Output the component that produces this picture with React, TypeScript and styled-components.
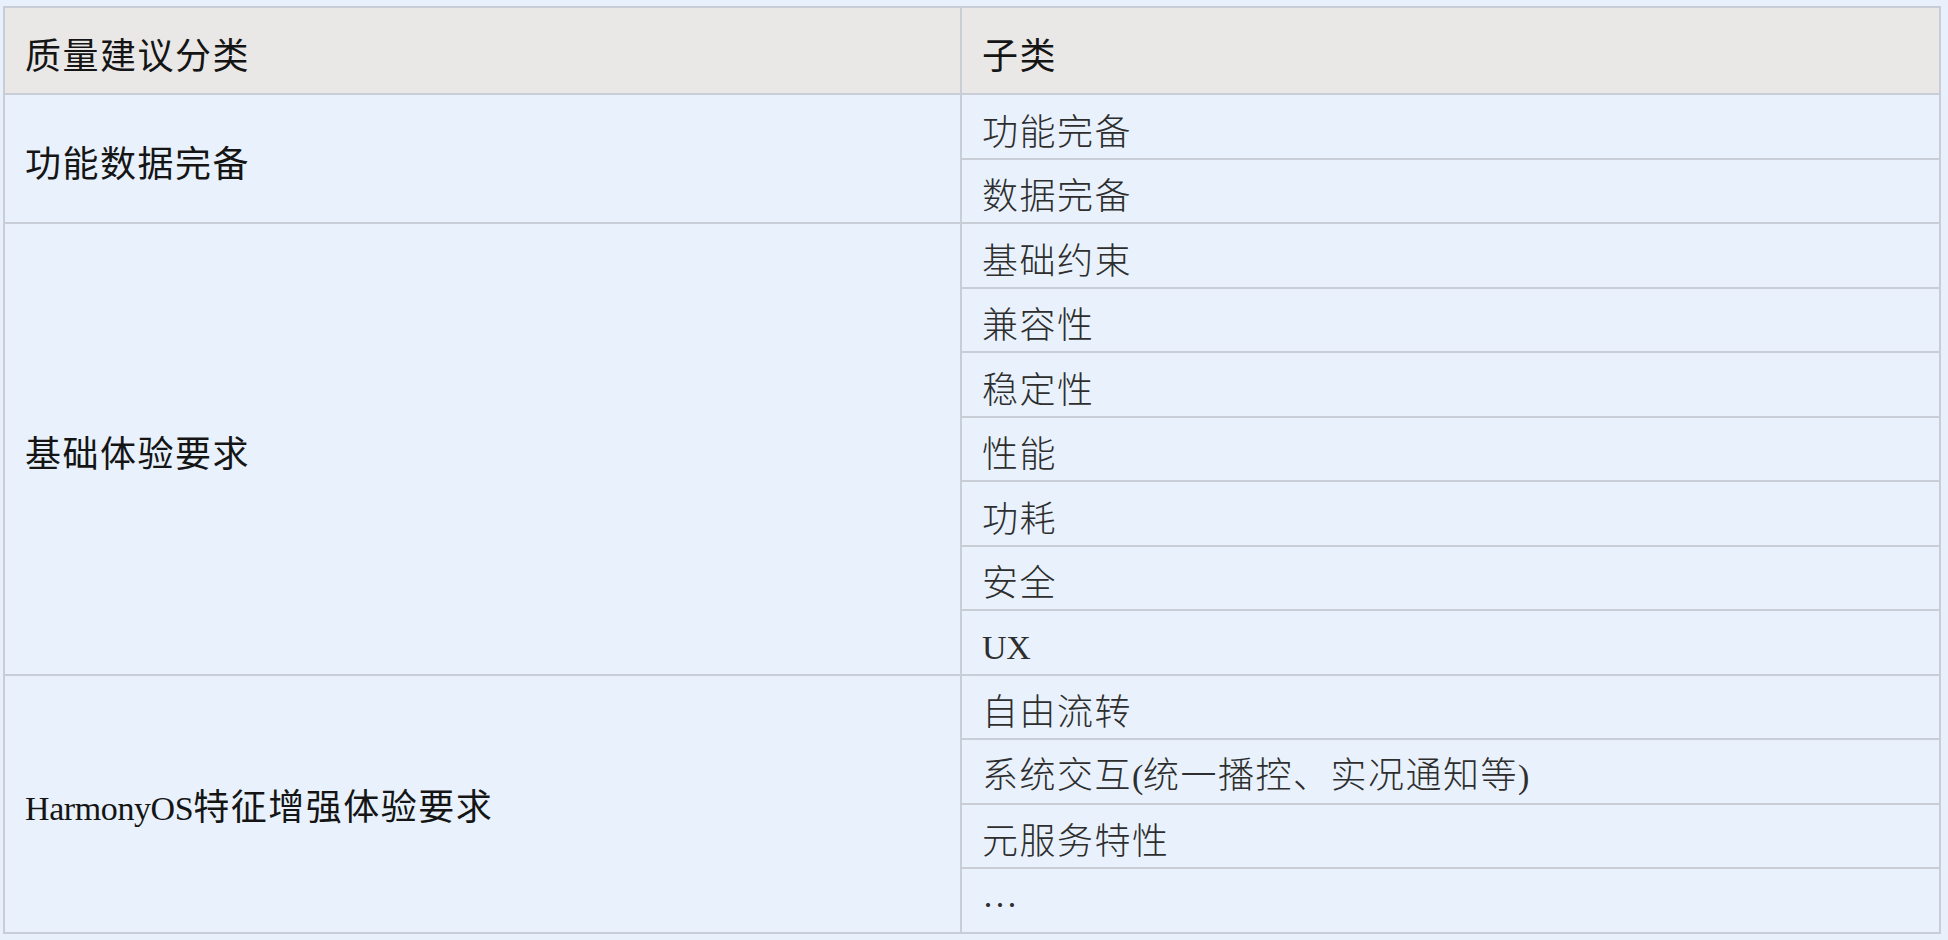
import React from 'react';
import styled, { createGlobalStyle } from 'styled-components';

const GlobalStyle = createGlobalStyle`
  html, body {
    margin: 0;
    padding: 0;
    background: #e8f1fb;
  }
`;

const Page = styled.div`
  width: 1948px;
  height: 940px;
  box-sizing: border-box;
  padding: 6px 0 0 3px;
  background: #e8f1fb;
  font-family: "Noto Sans CJK SC", "Noto Sans", sans-serif;
`;

const Table = styled.table`
  width: 1936px;
  border-collapse: collapse;
  table-layout: fixed;
  background: #e9f2fc;
  border: 2px solid #c9ced6;
`;

const HeadRow = styled.tr`
  height: 87px;
`;

const BodyRow = styled.tr`
  height: 64.5px;
`;

const Cell = styled.td`
  box-sizing: border-box;
  border: 2px solid #c9ced6;
  padding: 6px 20px 0 20px;
  font-size: 36px;
  line-height: 1.2;
  letter-spacing: 1.5px;
  font-weight: 400;
  vertical-align: middle;
  white-space: nowrap;
  text-align: left;
`;

const HeadCell = styled(Cell).attrs({ as: 'th' })`
  background: #e9e8e7;
  color: #151515;
  font-weight: 400;
`;

const GroupCell = styled(Cell)`
  color: #151515;
`;

const SubCell = styled(Cell)`
  color: #2e2e2e;
  font-weight: 300;
`;

const Latin = styled.span`
  font-family: "Liberation Serif", serif;
  font-size: 34px;
  font-weight: 400;
  letter-spacing: -0.4px;
`;

// split ascii runs into a serif span, the rest stays CJK
const Txt = ({ children }: { children: string }) => {
  const parts = children.split(/([\x20-\x7e]+)/).filter(Boolean);
  return (
    <>
      {parts.map((p, i) =>
        /^[\x20-\x7e]+$/.test(p) ? <Latin key={i}>{p}</Latin> : <React.Fragment key={i}>{p}</React.Fragment>
      )}
    </>
  );
};

const groups = [
  { name: '功能数据完备', subs: ['功能完备', '数据完备'] },
  { name: '基础体验要求', subs: ['基础约束', '兼容性', '稳定性', '性能', '功耗', '安全', 'UX'] },
  {
    name: 'HarmonyOS特征增强体验要求',
    subs: ['自由流转', '系统交互(统一播控、实况通知等)', '元服务特性', '…'],
  },
];

const App = () => {
  return (
    <Page lang="zh-CN">
      <GlobalStyle />
      <Table>
        <colgroup>
          <col style={{ width: 957 }} />
          <col style={{ width: 979 }} />
        </colgroup>
        <thead>
          <HeadRow>
            <HeadCell>质量建议分类</HeadCell>
            <HeadCell>子类</HeadCell>
          </HeadRow>
        </thead>
        <tbody>
          {groups.map((g) =>
            g.subs.map((s, i) => (
              <BodyRow key={g.name + s}>
                {i === 0 && (
                  <GroupCell rowSpan={g.subs.length}>
                    <Txt>{g.name}</Txt>
                  </GroupCell>
                )}
                <SubCell>
                  <Txt>{s}</Txt>
                </SubCell>
              </BodyRow>
            ))
          )}
        </tbody>
      </Table>
    </Page>
  );
};

export default App;
